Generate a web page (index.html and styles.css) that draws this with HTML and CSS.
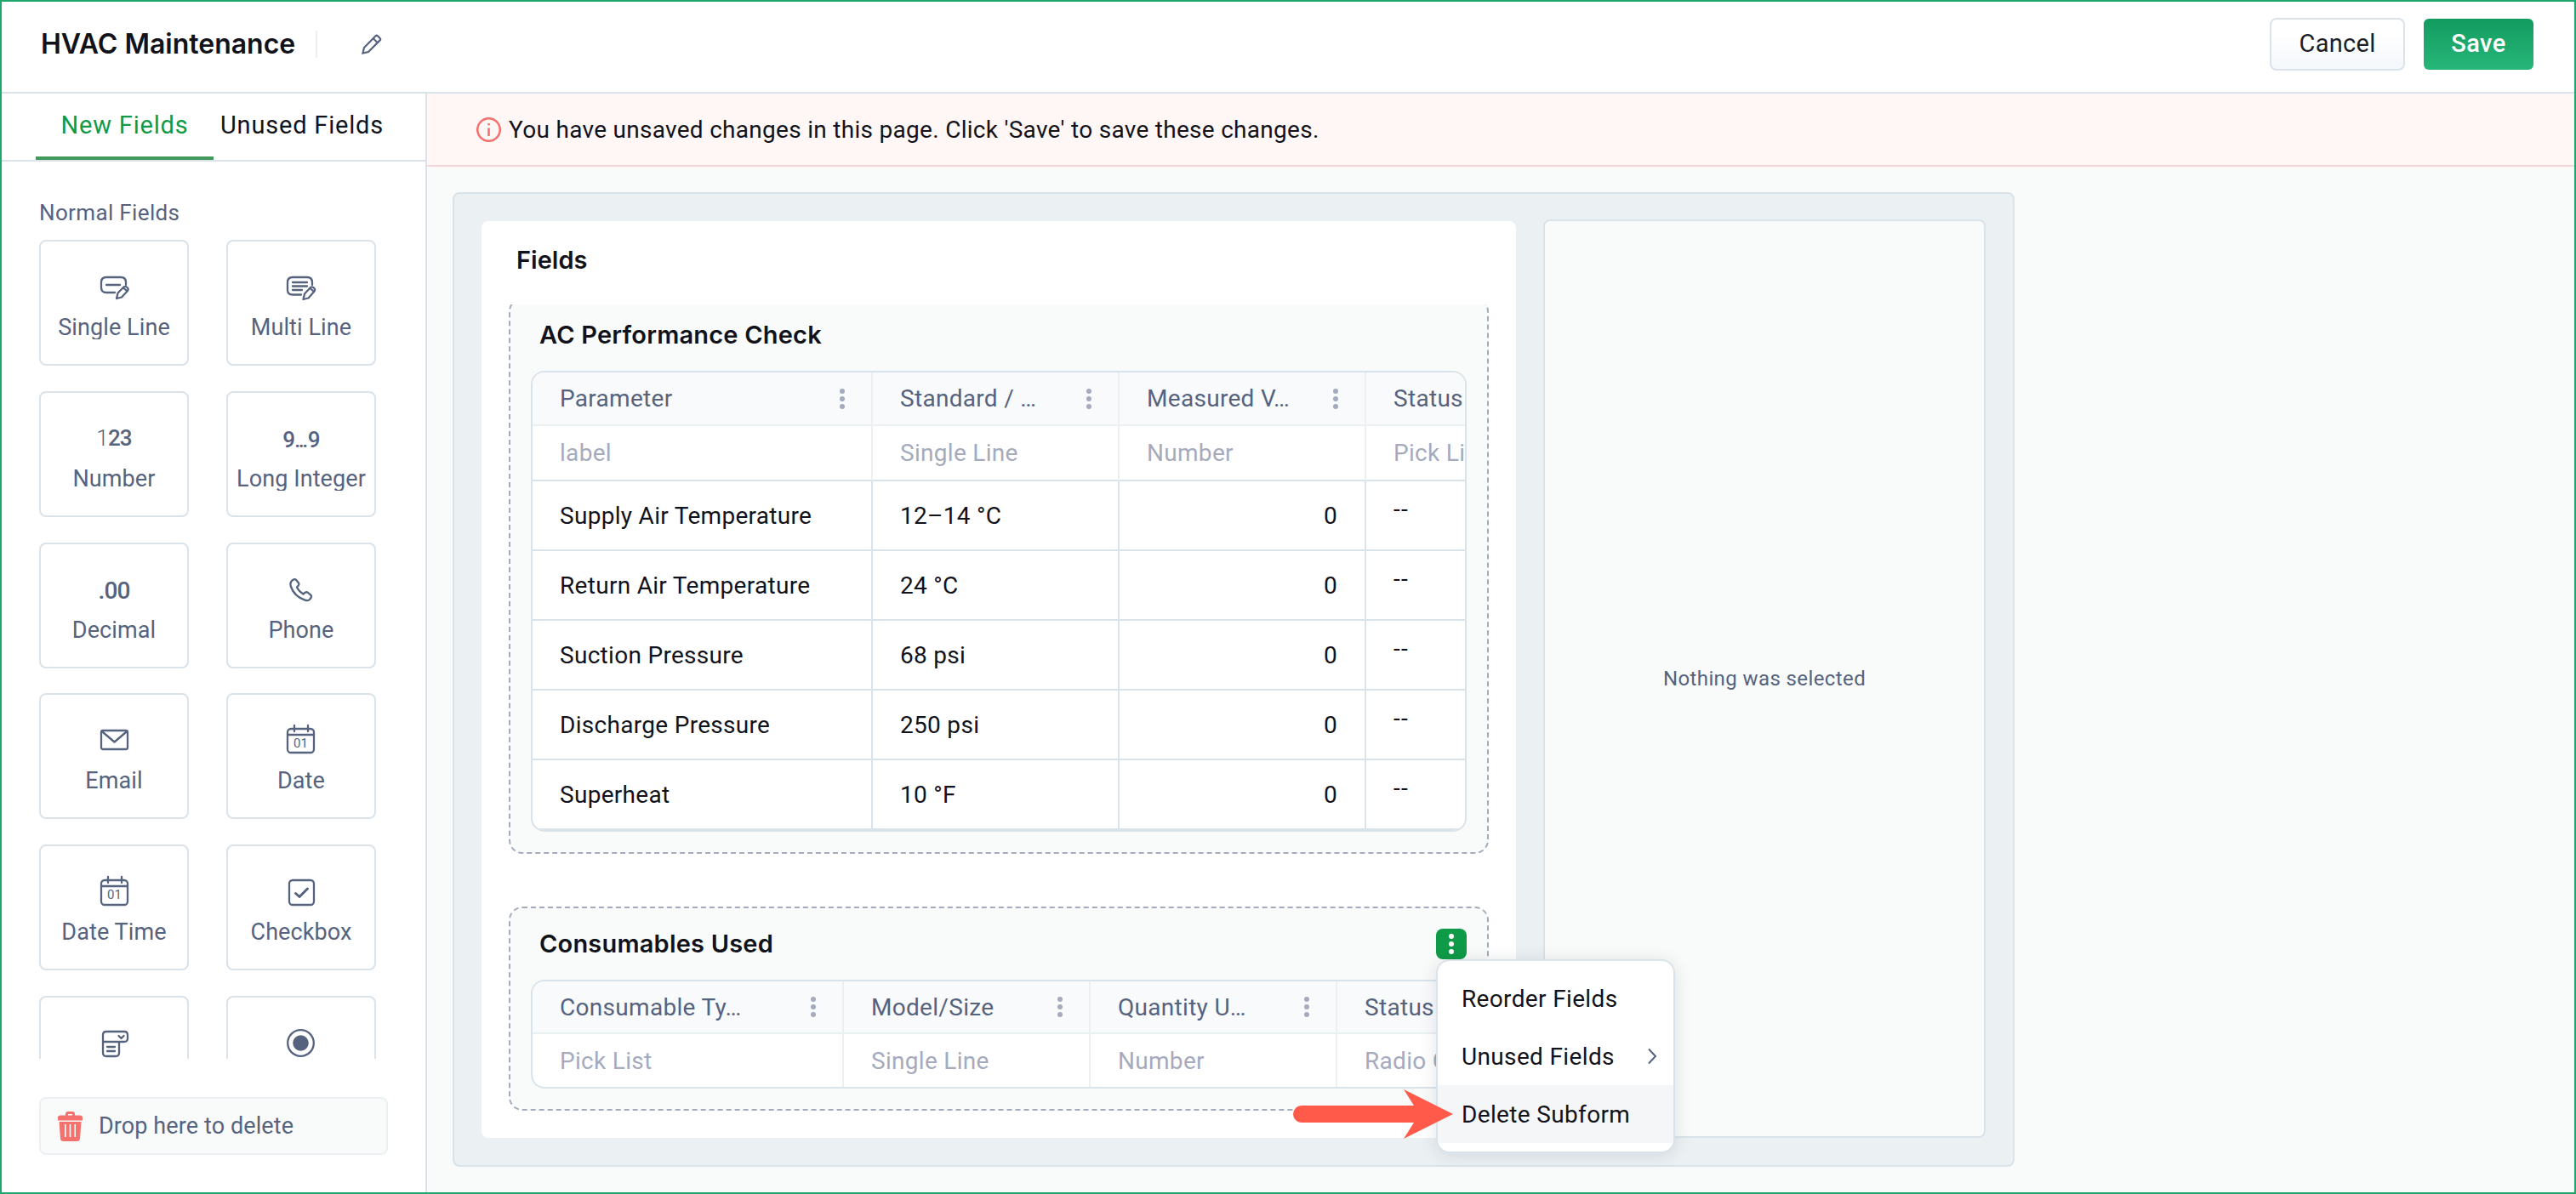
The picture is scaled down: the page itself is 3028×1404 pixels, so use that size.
FILE: index.html
```
<!DOCTYPE html>
<html lang="en">

<head>
  <meta charset="utf-8">
  <title>HVAC Maintenance</title>
  <link rel="stylesheet" href="styles.css">
</head>

<body>
  <div class="app">
    <header class="topbar">
      <h1>HVAC Maintenance</h1>
      <span class="divider"></span>
      <svg class="edit" width="24" height="24" viewBox="0 0 24 24">
        <path d="M1.5 22.5L3 16L16.5 2.3Q17.7 1.2 19 2.3L21.6 4.9Q22.8 6.2 21.6 7.4L8 21Z M13.8 5.2L18.8 10.2" />
      </svg>
      <div class="actions">
        <button class="btn cancel">Cancel</button>
        <button class="btn save">Save</button>
      </div>
    </header>

    <div class="content">
      <aside class="sidebar">
        <nav class="tabs">
          <a class="tab active">New Fields</a>
          <a class="tab">Unused Fields</a>
        </nav>

        <div class="field-list">
          <h2>Normal Fields</h2>
          <div class="field-grid">
            <div class="field">
              <svg class="icon" viewBox="0 0 36 36">
                <path d="M19 24H9Q3 24 3 18V12Q3 6 9 6H26Q32 6 32 12V15M9 15H25" />
                <path d="M21 31L22.5 24.5L29.5 17.5Q31.5 16 33.5 18Q35.5 20 34 22L27 29.5ZM29 18.5L33.5 22.5" />
              </svg>
              <span>Single Line</span>
            </div>
            <div class="field">
              <svg class="icon" viewBox="0 0 36 36">
                <path d="M18 26.5H8Q2 26.5 2 21V12Q2 6 8 6H25Q31 6 31 12V15M8 12H25M8 16.5H25M8 21H19" />
                <path d="M20.5 32L22 25.5L29 18Q31 16.5 33 18.5Q35 20.5 33.5 22.5L26.5 30.5ZM28.5 19L33 23" />
              </svg>
              <span>Multi Line</span>
            </div>
            <div class="field">
              <div class="icon glyph"><i>1</i>23</div>
              <span>Number</span>
            </div>
            <div class="field">
              <div class="icon glyph long">9<small>...</small>9</div>
              <span>Long Integer</span>
            </div>
            <div class="field">
              <div class="icon glyph decimal">.00</div>
              <span>Decimal</span>
            </div>
            <div class="field">
              <svg class="icon" viewBox="0 0 36 36">
                <path d="M7.5 6.5L9.5 5.3Q11 4.7 12.2 6L15 9.5Q16 11 14.8 12.4L13 14.5Q15 19 20.5 22.5L22.8 20.7Q24.3 19.8 25.8 20.8L29 23.4Q30.7 25 29.6 26.8L28 29Q26 30.8 22.5 29.6Q10 25.5 5.8 13.5Q4.5 9 7.5 6.5Z" />
              </svg>
              <span>Phone</span>
            </div>
            <div class="field">
              <svg class="icon" viewBox="0 0 36 36">
                <rect x="3" y="6" width="31" height="22" rx="2" />
                <path d="M3.8 7L18.5 19.5L33.2 7" />
              </svg>
              <span>Email</span>
            </div>
            <div class="field">
              <svg class="icon" viewBox="0 0 36 36">
                <rect x="2" y="4" width="31" height="28" rx="4" />
                <path d="M2 11H33M10 0V7M26 0V7" />
                <text x="17.5" y="25.5">01</text>
              </svg>
              <span>Date</span>
            </div>
            <div class="field">
              <svg class="icon" viewBox="0 0 36 36">
                <rect x="3" y="4" width="31" height="29" rx="4" />
                <path d="M3 11H34M11 0V7M27 0V7" />
                <text x="18.5" y="26">01</text>
              </svg>
              <span>Date Time</span>
            </div>
            <div class="field">
              <svg class="icon" viewBox="0 0 36 36">
                <rect x="4" y="4" width="29" height="29" rx="4" />
                <path class="bold" d="M11.5 19.5L16 23.5L25.5 14" />
              </svg>
              <span>Checkbox</span>
            </div>
            <div class="field">
              <svg class="icon" viewBox="0 0 36 36">
                <path d="M5 16V8Q5 4 9 4H30Q34 4 34 8V12Q34 16 30 16H5V29Q5 33 9 33H20Q24 33 24 29V16M10 22H19M10 27H19M23.5 9L26.5 12L29.5 9" />
              </svg>
              <span>Pick List</span>
            </div>
            <div class="field">
              <svg class="icon" viewBox="0 0 36 36">
                <circle cx="17.5" cy="17.5" r="15.3" />
                <circle class="solid" cx="17.5" cy="17.5" r="9.3" />
              </svg>
              <span>Radio</span>
            </div>
          </div>
        </div>

        <div class="drop-zone">
          <svg width="29" height="35" viewBox="0 0 29 35">
            <path d="M9 4.5V3Q9 0 12 0H17Q20 0 20 3V4.5H26Q29 4.5 29 7V10.5H0V7Q0 4.5 3 4.5ZM12 4.5H17V3H12Z" />
            <path d="M1.5 12H27.5L26 32Q25.7 35 22.5 35H6.5Q3.3 35 3 32ZM8 15V30H9.6V15ZM13.7 15V30H15.3V15ZM19.4 15V30H21V15Z" />
          </svg>
          Drop here to delete
        </div>
      </aside>

      <main class="workspace">
        <div class="banner">
          <svg width="29" height="29" viewBox="0 0 29 29">
            <circle cx="14.5" cy="14.5" r="13.3" />
            <path d="M14.5 12.5V22M14.5 7V9.2" />
          </svg>
          You have unsaved changes in this page. Click 'Save' to save these changes.
        </div>

        <div class="canvas">
          <section class="form-panel">
            <h2>Fields</h2>

            <div class="scrolled">
              <div class="subform">
                <div class="subform-head">
                  <h3>AC Performance Check</h3>
                </div>
                <div class="table-wrap">
                  <table class="readings">
                    <colgroup>
                      <col class="first">
                      <col>
                      <col>
                      <col>
                    </colgroup>
                    <tr class="names">
                      <th><div>Parameter <b class="dots"></b></div></th>
                      <th><div>Standard / … <b class="dots"></b></div></th>
                      <th><div>Measured V… <b class="dots"></b></div></th>
                      <th><div>Status</div></th>
                    </tr>
                    <tr class="types">
                      <td>label</td>
                      <td>Single Line</td>
                      <td>Number</td>
                      <td>Pick List</td>
                    </tr>
                    <tr>
                      <td>Supply Air Temperature</td>
                      <td>12–14 °C</td>
                      <td class="num">0</td>
                      <td class="empty">--</td>
                    </tr>
                    <tr>
                      <td>Return Air Temperature</td>
                      <td>24 °C</td>
                      <td class="num">0</td>
                      <td class="empty">--</td>
                    </tr>
                    <tr>
                      <td>Suction Pressure</td>
                      <td>68 psi</td>
                      <td class="num">0</td>
                      <td class="empty">--</td>
                    </tr>
                    <tr>
                      <td>Discharge Pressure</td>
                      <td>250 psi</td>
                      <td class="num">0</td>
                      <td class="empty">--</td>
                    </tr>
                    <tr>
                      <td>Superheat</td>
                      <td>10 °F</td>
                      <td class="num">0</td>
                      <td class="empty">--</td>
                    </tr>
                  </table>
                </div>
              </div>
            </div>

            <div class="subform">
              <div class="subform-head">
                <h3>Consumables Used</h3>
                <div class="more">
                  <button class="more-btn"><b class="dots"></b></button>
                  <ul class="menu">
                    <li>Reorder Fields</li>
                    <li>Unused Fields
                      <svg width="12" height="20" viewBox="0 0 12 20">
                        <path d="M2 1.5L10 10L2 18.5" />
                      </svg>
                    </li>
                    <li class="hover">Delete Subform</li>
                  </ul>
                  <svg class="arrow" width="188" height="58" viewBox="0 0 188 58">
                    <path d="M10 19H142L130 0L188 29L130 58L142 39H10A10 10 0 0 1 10 19Z" />
                  </svg>
                </div>
              </div>
              <div class="table-wrap">
                <table class="consumables">
                  <colgroup>
                    <col class="first">
                    <col>
                    <col>
                    <col>
                  </colgroup>
                  <tr class="names">
                    <th><div>Consumable Ty… <b class="dots"></b></div></th>
                    <th><div>Model/Size <b class="dots"></b></div></th>
                    <th><div>Quantity U… <b class="dots"></b></div></th>
                    <th><div>Status</div></th>
                  </tr>
                  <tr class="types">
                    <td>Pick List</td>
                    <td>Single Line</td>
                    <td>Number</td>
                    <td>Radio Group</td>
                  </tr>
                </table>
              </div>
            </div>
          </section>

          <section class="props-panel">Nothing was selected</section>
        </div>
      </main>
    </div>
  </div>
</body>

</html>
```
FILE: styles.css
```
* {
  box-sizing: border-box;
}

body {
  margin: 0;
  font-family: Roboto, 'Liberation Sans', sans-serif;
  font-size: 28px;
  color: #12131a;
}

h1,
h2,
h3 {
  margin: 0;
}

.app {
  display: flex;
  flex-direction: column;
  height: 1404px;
  border: 2px solid #1ea66c;
  background: white;
}

/* top bar */

.topbar {
  display: flex;
  align-items: center;
  height: 108px;
  padding: 0 48px 6px 46px;
  border-bottom: 2px solid #dae3ea;
}

.topbar h1 {
  font: 600 32px/36px Inter, sans-serif;
  padding-bottom: 1px;
}

.divider {
  width: 2px;
  height: 32px;
  margin-left: 24px;
  background: #ebf0f3;
}

.edit {
  margin-left: 52px;
  fill: none;
  stroke: #56637e;
  stroke-width: 2.2;
}

.actions {
  display: flex;
  align-items: center;
  gap: 22px;
  margin-left: auto;
}

.btn {
  height: 60px;
  padding: 0 0 2px;
  font-family: inherit;
  font-size: 29px;
  border: 0;
  border-radius: 6px;
}

.cancel {
  width: 159px;
  height: 62px;
  color: #1c1e28;
  letter-spacing: 0.3px;
  border: 2px solid #dae3ea;
  border-radius: 8px;
  background: linear-gradient(white 30%, #f4f7fb);
}

.save {
  width: 129px;
  color: white;
  font-weight: 500;
  letter-spacing: 0.4px;
  background: linear-gradient(#139b60, #27b679);
}

.content {
  display: flex;
  flex: 1;
  min-height: 0;
}

/* sidebar */

.sidebar {
  display: flex;
  flex-direction: column;
  width: 500px;
  border-right: 2px solid #dae3ea;
}

.tabs {
  display: flex;
  height: 80px;
  padding-left: 40px;
  border-bottom: 2px solid #dae3ea;
}

.tab {
  padding: 0 8px;
  font-size: 29px;
  line-height: 74px;
  letter-spacing: 0.8px;
  border-bottom: 4px solid transparent;
}

.tab.active {
  width: 209px;
  text-align: center;
  color: #0f9a48;
  border-color: #43995a;
}

.field-list {
  height: 1055px;
  padding: 44px 0 0 44px;
  overflow: hidden;
}

.field-list h2 {
  font-size: 26px;
  font-weight: normal;
  line-height: 32px;
  letter-spacing: 0.35px;
  color: #56637e;
}

.field-grid {
  display: grid;
  grid-template-columns: 176px 176px;
  grid-auto-rows: 148px;
  gap: 29.8px 44px;
  margin-top: 16px;
}

.field {
  display: flex;
  flex-direction: column;
  align-items: center;
  padding-top: 36px;
  color: #56637e;
  border: 2px solid #dae3ea;
  border-radius: 8px;
}

.field span {
  height: 27px;
  margin-top: 16px;
  font-size: 27px;
  line-height: 27px;
  letter-spacing: 0.1px;
  white-space: nowrap;
  overflow: hidden;
}

.icon {
  width: 36px;
  height: 36px;
  overflow: visible;
  fill: none;
  stroke: #56637e;
  stroke-width: 2.3;
  stroke-linejoin: round;
  stroke-linecap: round;
}

.icon .bold {
  stroke-width: 3;
}

.icon .solid,
.icon text {
  fill: #56637e;
  stroke: none;
}

.icon text {
  font-size: 15px;
  text-anchor: middle;
}

.glyph {
  display: flex;
  justify-content: center;
  align-items: baseline;
  font-size: 26px;
  font-weight: 500;
  line-height: 35px;
  letter-spacing: -0.9px;
}

.glyph i {
  font-style: normal;
  font-weight: 300;
}

.glyph small {
  font-size: 25px;
  letter-spacing: -2.4px;
  margin-right: 2px;
}

.glyph.long {
  line-height: 38px;
}

.glyph.decimal {
  font-size: 28px;
  line-height: 37px;
}

.drop-zone {
  display: flex;
  align-items: center;
  gap: 19px;
  width: 410px;
  height: 68px;
  margin: 45px 0 0 44px;
  padding-left: 20px;
  font-size: 27px;
  letter-spacing: 0.1px;
  color: #56637e;
  border: 2px solid #ebf0f3;
  border-radius: 8px;
  background: #f9fbfa;
}

.drop-zone svg {
  fill: #f4716e;
  fill-rule: evenodd;
}

/* workspace */

.workspace {
  flex: 1;
  background: #f9fbfa;
}

.banner {
  display: flex;
  align-items: center;
  gap: 9px;
  height: 86px;
  padding-left: 58px;
  letter-spacing: 0.29px;
  border-bottom: 2px solid #f7d6d8;
  background: #fff6f6;
}

.banner svg {
  fill: none;
  stroke: #f4716e;
  stroke-width: 2.6;
}

.canvas {
  display: flex;
  width: 1836px;
  height: 1146px;
  margin: 30px 0 0 30px;
  padding: 30px 32px 32px;
  border: 2px solid #dae3ea;
  border-radius: 8px;
  background: #ebf0f3;
}

.form-panel {
  width: 1216px;
  margin-top: 2px;
  padding: 0 32px;
  border-radius: 8px;
  background: white;
}

.form-panel h2 {
  height: 98px;
  padding-left: 9px;
  font: 600 29px/92px Inter, sans-serif;
}

.props-panel {
  display: flex;
  align-items: center;
  justify-content: center;
  width: 520px;
  margin-left: 32px;
  font-size: 24px;
  letter-spacing: 0.4px;
  color: #56637e;
  border: 2px solid #dae3ea;
  border-radius: 8px;
  background: #f9fbfa;
}

/* subforms */

.scrolled {
  margin-bottom: 62px;
  overflow: hidden;
}

.scrolled .subform {
  margin-top: -8px;
}

.subform {
  padding: 0 24px 24px;
  border: 2px dashed #a5abbd;
  border-radius: 16px;
  background: #f9fbfa;
}

.subform-head {
  display: flex;
  align-items: center;
  justify-content: space-between;
  height: 84px;
  padding-left: 10px;
}

.subform-head h3 {
  font: 600 29px/36px Inter, sans-serif;
  letter-spacing: 0.2px;
}

.table-wrap {
  border: 2px solid #dae3ea;
  border-radius: 16px;
  overflow: hidden;
  background: white;
}

table {
  width: 1270px;
  table-layout: fixed;
  border-spacing: 0;
}

.readings .first {
  width: 400px;
}

.consumables {
  width: 1236px;
}

.consumables .first {
  width: 366px;
}

th,
td {
  height: 82px;
  padding: 0 32px;
  font-weight: normal;
  text-align: left;
  letter-spacing: 0.3px;
  white-space: nowrap;
  border-right: 2px solid #dae3ea;
  border-bottom: 2px solid #dae3ea;
}

.names th {
  height: 63px;
  padding-right: 31px;
  color: #56637e;
  border-color: #ebf0f3;
  background: #f9fafc;
}

.names th div {
  display: flex;
  align-items: center;
  justify-content: space-between;
}

.types td {
  height: 65px;
  color: #a5abbd;
  border-right-color: #ebf0f3;
}

.consumables .names th {
  height: 62px;
}

.consumables .types td {
  height: 62px;
  border-bottom: 0;
}

.num {
  text-align: right;
}

.empty {
  padding-bottom: 16px;
  letter-spacing: 1.2px;
}

.dots {
  width: 6px;
  height: 6px;
  border-radius: 50%;
  background: #a5abbd;
  box-shadow: 0 -9px #a5abbd, 0 9px #a5abbd;
}

/* subform menu */

.more {
  position: relative;
  height: 36px;
}

.more-btn {
  display: flex;
  align-items: center;
  justify-content: center;
  width: 36px;
  height: 36px;
  padding: 0;
  border: 0;
  border-radius: 8px;
  background: #0f9a48;
}

.more-btn .dots {
  background: white;
  box-shadow: 0 -9px white, 0 9px white;
}

.menu {
  position: absolute;
  top: 36px;
  left: 0;
  z-index: 1;
  width: 281px;
  margin: 0;
  padding: 10px 0;
  list-style: none;
  border: 2px solid #dae3ea;
  border-radius: 16px;
  background: white;
  box-shadow: 0 2px 20px rgba(20, 30, 50, 0.12);
}

.menu li {
  display: flex;
  align-items: center;
  justify-content: space-between;
  height: 68px;
  padding: 0 19px 0 28px;
  letter-spacing: 0.35px;
}

.menu li.hover {
  background: #f4f6f8;
}

.menu svg {
  fill: none;
  stroke: #56637e;
  stroke-width: 2;
}

.arrow {
  position: absolute;
  top: 189px;
  left: -168px;
  z-index: 2;
  fill: #ff5a4a;
}
```
